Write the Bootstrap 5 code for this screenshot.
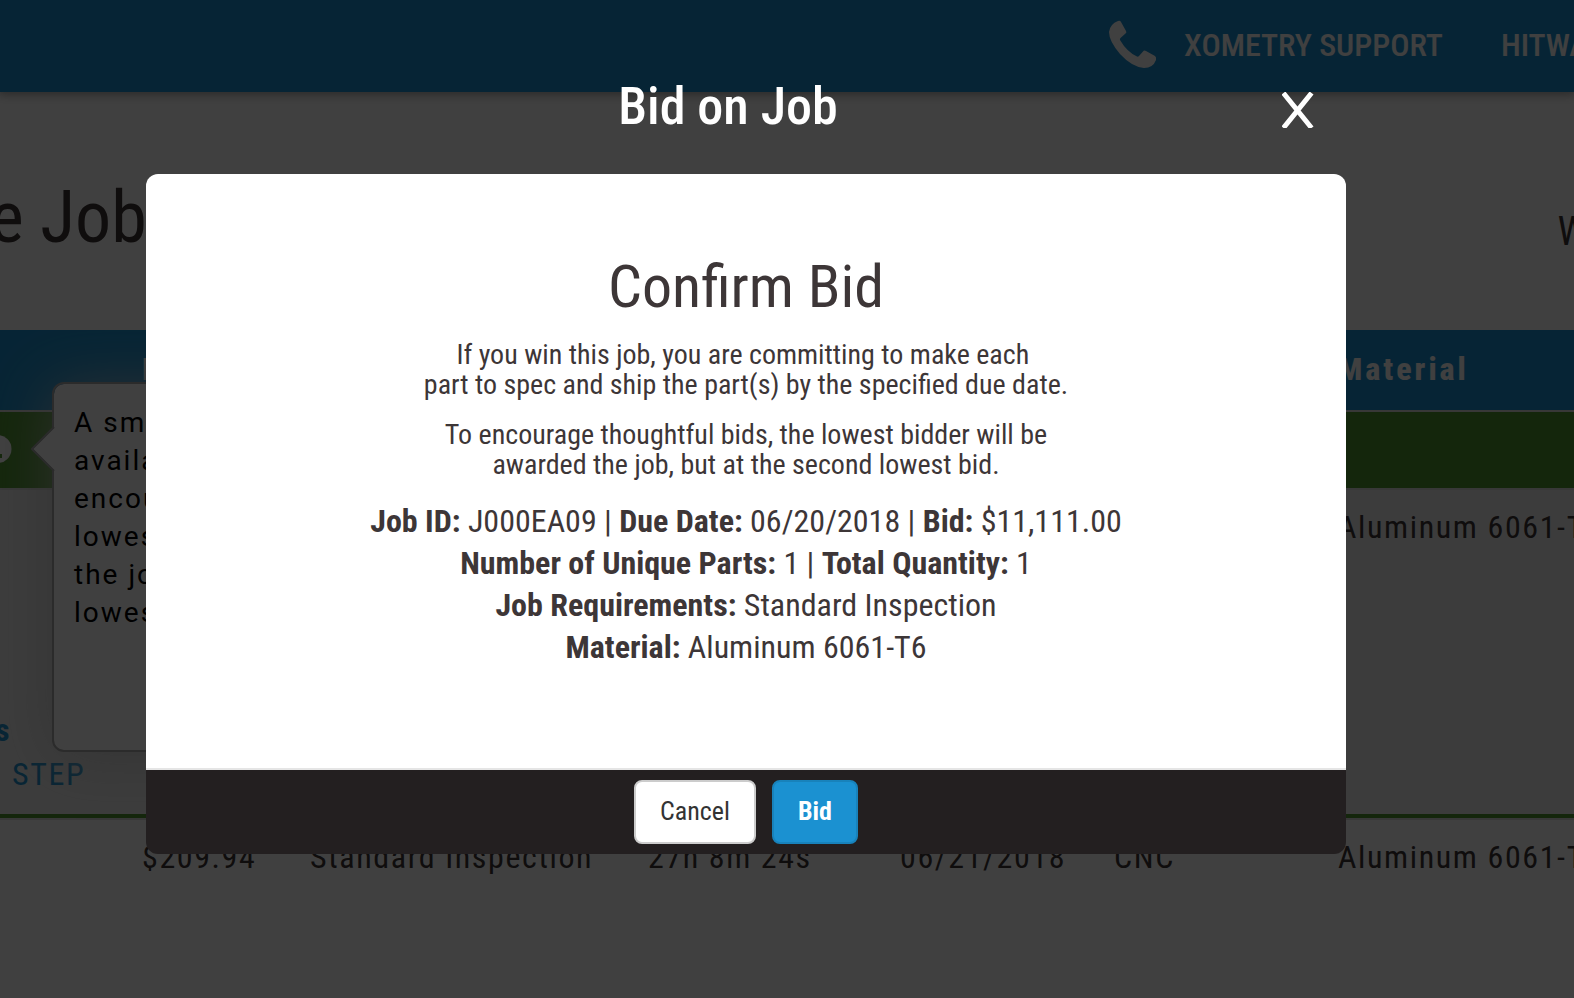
<!DOCTYPE html>
<html lang="en">
<head>
<meta charset="utf-8">
<meta name="viewport" content="width=device-width, initial-scale=1">
<title>Bid on Job</title>
<link href="https://cdn.jsdelivr.net/npm/bootstrap@5.3.0/dist/css/bootstrap.min.css" rel="stylesheet">
<style>
  :root { --brand: #1b91d1; --leaf: #509830; --ink: #3d3637; }
  body { font-family: "Roboto Condensed", Roboto, sans-serif; font-size: 32px; line-height: 42px; color: var(--ink); overflow: hidden; }
  .top-bar { background: var(--brand); height: 92px; box-shadow: 0 0 10px 2px rgba(0,0,0,.4); white-space: nowrap; padding-bottom: 2px; }
  .top-bar a { color: #fff; text-decoration: none; font-weight: 500; }
  .support-link { margin-left: 1108px; gap: 26px; }
  .account-link { margin-left: 58px; }
  .page-head { height: 238px; color: #3d3637; }
  .page-title { font-size: 72px; line-height: 84px; font-weight: 400; margin: 84px 0 0 -10px; }
  .page-note { font-size: 40px; line-height: 48px; margin: 116px -14px 0 0; }
  .jobs { table-layout: fixed; width: 1700px; letter-spacing: .05em; margin: 0; white-space: nowrap; border-collapse: separate; border-spacing: 0; }
  .jobs th, .jobs td { padding: 14px 16px 0; border: 0; vertical-align: top; text-align: left; line-height: 46px; }
  .jobs thead th { background: var(--brand); color: #fff; font-weight: 800; height: 80px; letter-spacing: 3px; padding-top: 16px; }
  .jobs .group-row td { background: var(--leaf); height: 78px; border-top: 2px solid #ddd; padding: 0; }
  .jobs .open-row td { background: #f0f0f0; height: 330px; border-top: 2px solid #ddd; border-bottom: 4px solid var(--leaf); }
  .jobs .next-row td { border-top: 2px solid #ddd; }
  .files { padding-top: 218px; line-height: 44px; }
  .files a { margin-left: 12px; }
  .files a.cut { margin-left: -5px; }
  .jobs a { color: var(--brand); text-decoration: none; }
  .job-hint { z-index: 10; left: 52px; top: 382px; width: 420px; max-width: none; height: 370px; border: 2px solid #aaa; border-radius: 12px; box-shadow: 0 6px 60px rgba(200,200,200,.9); font-family: Roboto, sans-serif; font-size: 28px; letter-spacing: 2px; }
  .job-hint .popover-body { padding: 20px; font-size: 28px; line-height: 38px; color: #000; }
  .hint-arrow { left: -23px; top: 42px; }
  .modal-backdrop { --bs-backdrop-opacity: .75; }
  .bid-dialog { max-width: none; margin: 0 228px 0 146px; }
  .bid-dialog .modal-content { background: transparent; border: 0; color: var(--ink); }
  .bid-dialog .modal-header { height: 174px; border: 0; padding: 72px 32px 0 28px; align-items: flex-start; }
  .bid-dialog .modal-title { flex: 1; text-align: center; color: #fff; font-size: 52px; line-height: 70px; font-weight: 500; }
  .close-x { background: none; border: 0; padding: 0; line-height: 0; margin-top: 20px; }
  .bid-dialog .modal-body { background: #fff; border-radius: 12px 12px 0 0; padding: 77px 16px 100px; text-align: center; }
  .confirm-title { font-size: 60px; line-height: 72px; font-weight: 400; margin: 0 0 17px; }
  .terms { font-size: 28px; line-height: 30px; margin: 0 0 20px; }
  .bid-dialog .modal-footer { background: #231f20; border-top: 2px solid #e5e5e5; border-radius: 0 0 12px 12px; padding: 10px; gap: 16px; }
  .bid-dialog .btn { margin: 0; height: 64px; font-size: 26px; line-height: 36px; padding: 10px 24px 12px; border-width: 2px; border-radius: 8px; }
  .btn-cancel { background: #fff; border-color: #ccc; color: #333; }
  .btn-bid { background: var(--brand); border-color: #1882bb; color: #fff; font-weight: 700; }
</style>
</head>
<body>
<header class="top-bar d-flex align-items-center position-relative">
  <a href="#" class="support-link d-flex align-items-center">
    <svg width="50" height="50" viewBox="0 0 50 50" fill="#fff" aria-hidden="true"><path d="M10 1Q12 0 13 2L18 11Q19 12.500 17.500 13.500L12.500 18Q11.500 19 12 20Q19 32 29 36.500Q30 37 31 36L35 31.500Q36 30 38 31L47 36Q48.500 37 48 40Q45 48 36 48Q24 47 12 34Q1 21 1 12Q2 4 10 1Z"/></svg>
    <span>XOMETRY SUPPORT</span>
  </a>
  <a href="#" class="account-link">HITWA</a>
</header>
<main class="overflow-hidden">
  <div class="page-head d-flex justify-content-between">
    <h1 class="page-title">e Job</h1>
    <p class="page-note">W</p>
  </div>
  <table class="jobs">
    <colgroup><col style="width:126px"><col style="width:168px"><col style="width:338px"><col style="width:252px"><col style="width:214px"><col style="width:224px"><col></colgroup>
    <thead><tr><th></th><th>Price</th><th></th><th></th><th></th><th></th><th>Material</th></tr></thead>
    <tbody>
      <tr class="group-row"><td colspan="7"><svg class="d-block" width="12" height="74" viewBox="0 0 12 74" aria-hidden="true"><circle cx="-2.500" cy="37" r="14" fill="#fff"/><rect x="-2" y="42" width="4" height="4" fill="#509830"/></svg></td></tr>
      <tr class="open-row"><td class="p-0"><div class="files"><a href="#" class="cut"><b>s</b></a><br><a href="#">STEP</a></div></td><td></td><td></td><td></td><td></td><td></td><td>Aluminum 6061-T6</td></tr>
      <tr class="next-row"><td></td><td>$209.94</td><td>Standard Inspection</td><td>27h 8m 24s</td><td>06/21/2018</td><td>CNC</td><td>Aluminum 6061-T6</td></tr>
    </tbody>
  </table>
  <div class="popover job-hint position-absolute" role="tooltip">
    <svg class="hint-arrow position-absolute" width="24" height="46" viewBox="0 0 24 46" aria-hidden="true"><path d="M24 1L2 23L24 45Z" fill="#fff"/><path d="M23 1L1 23L23 45" fill="none" stroke="#aaa" stroke-width="2"/></svg>
    <div class="popover-body">A sm<br>availa<br>encou<br>lowes<br>the jo<br>lowes</div>
  </div>
</main>
<div class="modal-backdrop show"></div>
<div class="modal d-block" role="dialog" aria-modal="true" aria-labelledby="bidTitle">
  <div class="modal-dialog bid-dialog">
    <div class="modal-content">
      <div class="modal-header">
        <h2 class="modal-title" id="bidTitle">Bid on Job</h2>
        <button type="button" class="close-x" aria-label="Close"><svg width="32" height="36" viewBox="0 0 32 36" aria-hidden="true"><path d="M3 3L28 34M28 3L3 34" stroke="#fff" stroke-width="5" stroke-linecap="square" fill="none"/></svg></button>
      </div>
      <div class="modal-body">
        <h3 class="confirm-title">Confirm Bid</h3>
        <p class="terms">If you win this job, you are committing to make each&nbsp;<br>part to spec and ship the part(s) by the specified due date.</p>
        <p class="terms">To encourage thoughtful bids, the lowest bidder will be<br>awarded the job, but at the second lowest bid.</p>
        <div><b>Job ID:</b> J000EA09 | <b>Due Date:</b> 06/20/2018 | <b>Bid:</b> $11,111.00</div>
        <div><b>Number of Unique Parts:</b> 1 | <b>Total Quantity:</b> 1</div>
        <div><b>Job Requirements:</b> Standard Inspection</div>
        <div><b>Material:</b> Aluminum 6061-T6</div>
      </div>
      <div class="modal-footer justify-content-center">
        <button type="button" class="btn btn-cancel">Cancel</button>
        <button type="button" class="btn btn-bid">Bid</button>
      </div>
    </div>
  </div>
</div>
<script src="https://cdn.jsdelivr.net/npm/bootstrap@5.3.0/dist/js/bootstrap.bundle.min.js"></script>
</body>
</html>
